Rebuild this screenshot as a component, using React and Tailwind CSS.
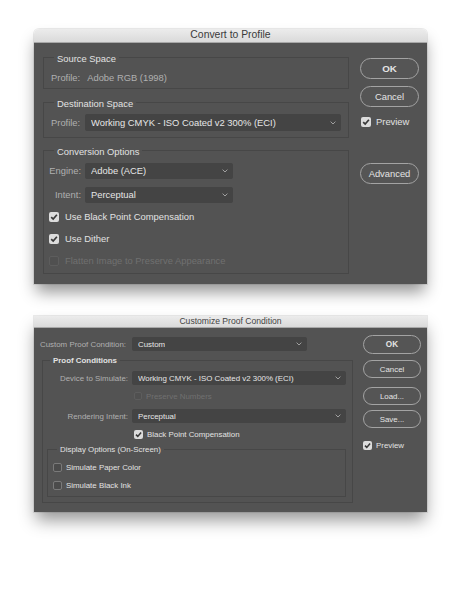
import React from "react";

function Chevron() {
  return (
    <svg width="6" height="4" viewBox="0 0 6 4" className="shrink-0">
      <path d="M0.6 0.6 L3 3 L5.4 0.6" fill="none" stroke="#a0a0a0" strokeWidth="1" />
    </svg>
  );
}

function Select({ children, className }) {
  return (
    <div className={`flex items-center justify-between bg-[#444444] rounded-[2px] pl-[6px] pr-[5px] text-[#e6e6e6] ${className}`}>
      <span className="truncate">{children}</span>
      <Chevron />
    </div>
  );
}

function Box({ state, size }) {
  const s = size === "sm" ? "w-[8px] h-[8px]" : size === "md" ? "w-[9px] h-[9px]" : "w-[10px] h-[10px]";
  if (state === "on")
    return (
      <span className={`${s} shrink-0 flex items-center justify-center rounded-[2px] bg-[#dcdcdc]`}>
        <svg viewBox="0 0 10 10" className="w-full h-full">
          <path d="M2.2 5.1 L4.2 7.1 L7.9 2.8" fill="none" stroke="#383838" strokeWidth="1.7" />
        </svg>
      </span>
    );
  if (state === "dis")
    return <span className={`${s} shrink-0 rounded-[2px] border border-[#5d5d5d] bg-[#505050]`} />;
  return <span className={`${s} shrink-0 rounded-[2px] border border-[#7a7a7a] bg-[#4b4b4b]`} />;
}

function Btn({ children, className }) {
  return (
    <div className={`flex items-center justify-center rounded-full border border-[#a3a3a3] bg-[#555555] text-[#e4e4e4] ${className}`}>
      {children}
    </div>
  );
}

export default function App() {
  return (
    <div className="w-[455px] min-h-[599px] bg-white pt-[29px] font-['Liberation_Sans',Arial,sans-serif] antialiased">
      {/* Dialog 1 */}
      <div className="w-[393px] ml-[34px] rounded-t-[5px] shadow-[0_0_0_1px_rgba(0,0,0,0.08),0_10px_16px_-2px_rgba(0,0,0,0.42)] text-[9.4px]">
        <div className="h-[14px] rounded-t-[5px] bg-gradient-to-b from-[#ececec] to-[#dadada] border-b border-[#a8a8a8] flex items-center justify-center text-[10.4px] text-[#3a3a3a] leading-none">
          Convert to Profile
        </div>
        <div className="bg-[#535353] h-[241px] flex pl-[9px]">
          <div className="w-[306px] flex flex-col">
            <fieldset className="mt-[7px] border border-[#474747]">
              <legend className="ml-[10px] px-[3px] pt-[3px] leading-[12px] text-[#e2e2e2]">Source Space</legend>
              <div className="flex items-center h-[12px] pl-[7px] mt-[7px] mb-[4px] text-[#b0b0b0] leading-[12px]">
                <span>Profile:</span>
                <span className="ml-[7px]">Adobe RGB (1998)</span>
              </div>
            </fieldset>

            <fieldset className="mt-[6px] border border-[#474747]">
              <legend className="ml-[10px] px-[3px] pt-[3px] leading-[12px] text-[#e2e2e2]">Destination Space</legend>
              <div className="flex items-center h-[17px] pl-[7px] mt-[4px] mb-[6px] leading-[12px]">
                <span className="w-[29px] text-right text-[#b0b0b0]">Profile:</span>
                <Select className="ml-[5px] w-[256px] h-[17px]">Working CMYK - ISO Coated v2 300% (ECI)</Select>
              </div>
            </fieldset>

            <fieldset className="mt-[5px] border border-[#474747]">
              <legend className="ml-[10px] px-[3px] pt-[3px] leading-[12px] text-[#e2e2e2]">Conversion Options</legend>
              <div className="flex flex-col pl-[5px] mb-[6px] leading-[12px]">
                <div className="flex items-center h-[16px] mt-[5px]">
                  <span className="w-[32px] text-right text-[#b0b0b0]">Engine:</span>
                  <Select className="ml-[4px] w-[148px] h-[16px]">Adobe (ACE)</Select>
                </div>
                <div className="flex items-center h-[16px] mt-[8px]">
                  <span className="w-[32px] text-right text-[#b0b0b0]">Intent:</span>
                  <Select className="ml-[4px] w-[148px] h-[16px]">Perceptual</Select>
                </div>
                <div className="flex items-center h-[12px] mt-[8px] gap-[6px] text-[#e2e2e2]">
                  <Box state="on" />
                  <span>Use Black Point Compensation</span>
                </div>
                <div className="flex items-center h-[12px] mt-[10px] gap-[6px] text-[#e2e2e2]">
                  <Box state="on" />
                  <span>Use Dither</span>
                </div>
                <div className="flex items-center h-[12px] mt-[10px] gap-[6px] text-[#707070]">
                  <Box state="dis" />
                  <span>Flatten Image to Preserve Appearance</span>
                </div>
              </div>
            </fieldset>
          </div>

          <div className="ml-[11px] w-[59px] flex flex-col leading-[12px]">
            <Btn className="mt-[15px] h-[21px] font-bold text-[9.8px]">OK</Btn>
            <Btn className="mt-[7px] h-[21px]">Cancel</Btn>
            <div className="mt-[9px] h-[12px] ml-[1px] flex items-center gap-[5px] text-[#e2e2e2]">
              <Box state="on" />
              <span>Preview</span>
            </div>
            <Btn className="mt-[35px] h-[21px]">Advanced</Btn>
          </div>
        </div>
      </div>

      {/* Dialog 2 */}
      <div className="w-[393px] ml-[34px] mt-[32px] shadow-[0_0_0_1px_rgba(0,0,0,0.08),0_10px_16px_-2px_rgba(0,0,0,0.42)] text-[7.9px]">
        <div className="h-[12px] bg-gradient-to-b from-[#ececec] to-[#dadada] border-b border-[#a8a8a8] flex items-center justify-center text-[8.6px] text-[#444444] leading-none">
          Customize Proof Condition
        </div>
        <div className="bg-[#535353] h-[184px] flex pl-[6px]">
          <div className="w-[313px] flex flex-col leading-[11px]">
            <div className="flex items-center h-[14px] mt-[9px]">
              <span className="w-[89px] text-[#b0b0b0]">Custom Proof Condition:</span>
              <Select className="ml-[3px] w-[175px] h-[14px]">Custom</Select>
            </div>
            <fieldset className="ml-[2px] w-[311px] mt-[4px] border border-[#474747]">
              <legend className="ml-[7px] px-[3px] leading-[11px] font-bold text-[#e2e2e2]">Proof Conditions</legend>
              <div className="flex flex-col pl-[4px] pr-[6px] mb-[5px]">
                <div className="flex items-center h-[14px] mt-[5px]">
                  <span className="w-[81px] text-right text-[#b0b0b0]">Device to Simulate:</span>
                  <Select className="ml-[4px] flex-1 h-[14px]">Working CMYK - ISO Coated v2 300% (ECI)</Select>
                </div>
                <div className="flex items-center h-[12px] mt-[5px] pl-[87px] gap-[4px] text-[#707070]">
                  <Box state="dis" size="sm" />
                  <span>Preserve Numbers</span>
                </div>
                <div className="flex items-center h-[14px] mt-[7px]">
                  <span className="w-[81px] text-right text-[#b0b0b0]">Rendering Intent:</span>
                  <Select className="ml-[4px] flex-1 h-[14px]">Perceptual</Select>
                </div>
                <div className="flex items-center h-[12px] mt-[5px] pl-[87px] gap-[4px] text-[#e2e2e2]">
                  <Box state="on" size="md" />
                  <span>Black Point Compensation</span>
                </div>
                <fieldset className="mt-[4px] border border-[#474747]">
                  <legend className="ml-[9px] px-[3px] leading-[11px] text-[#e2e2e2]">Display Options (On-Screen)</legend>
                  <div className="flex flex-col pl-[5px] mb-[5px]">
                    <div className="flex items-center h-[12px] mt-[6px] gap-[4px] text-[#e2e2e2]">
                      <Box state="off" size="md" />
                      <span>Simulate Paper Color</span>
                    </div>
                    <div className="flex items-center h-[12px] mt-[6px] gap-[4px] text-[#e2e2e2]">
                      <Box state="off" size="md" />
                      <span>Simulate Black Ink</span>
                    </div>
                  </div>
                </fieldset>
              </div>
            </fieldset>
          </div>

          <div className="ml-[10px] w-[58px] flex flex-col leading-[11px]">
            <Btn className="mt-[7px] h-[19px] font-bold text-[8.2px]">OK</Btn>
            <Btn className="mt-[6px] h-[18px]">Cancel</Btn>
            <Btn className="mt-[9px] h-[18px]">Load...</Btn>
            <Btn className="mt-[5px] h-[18px]">Save...</Btn>
            <div className="mt-[11px] h-[12px] flex items-center gap-[4px] text-[#e2e2e2]">
              <Box state="on" size="md" />
              <span>Preview</span>
            </div>
          </div>
        </div>
      </div>
    </div>
  );
}
